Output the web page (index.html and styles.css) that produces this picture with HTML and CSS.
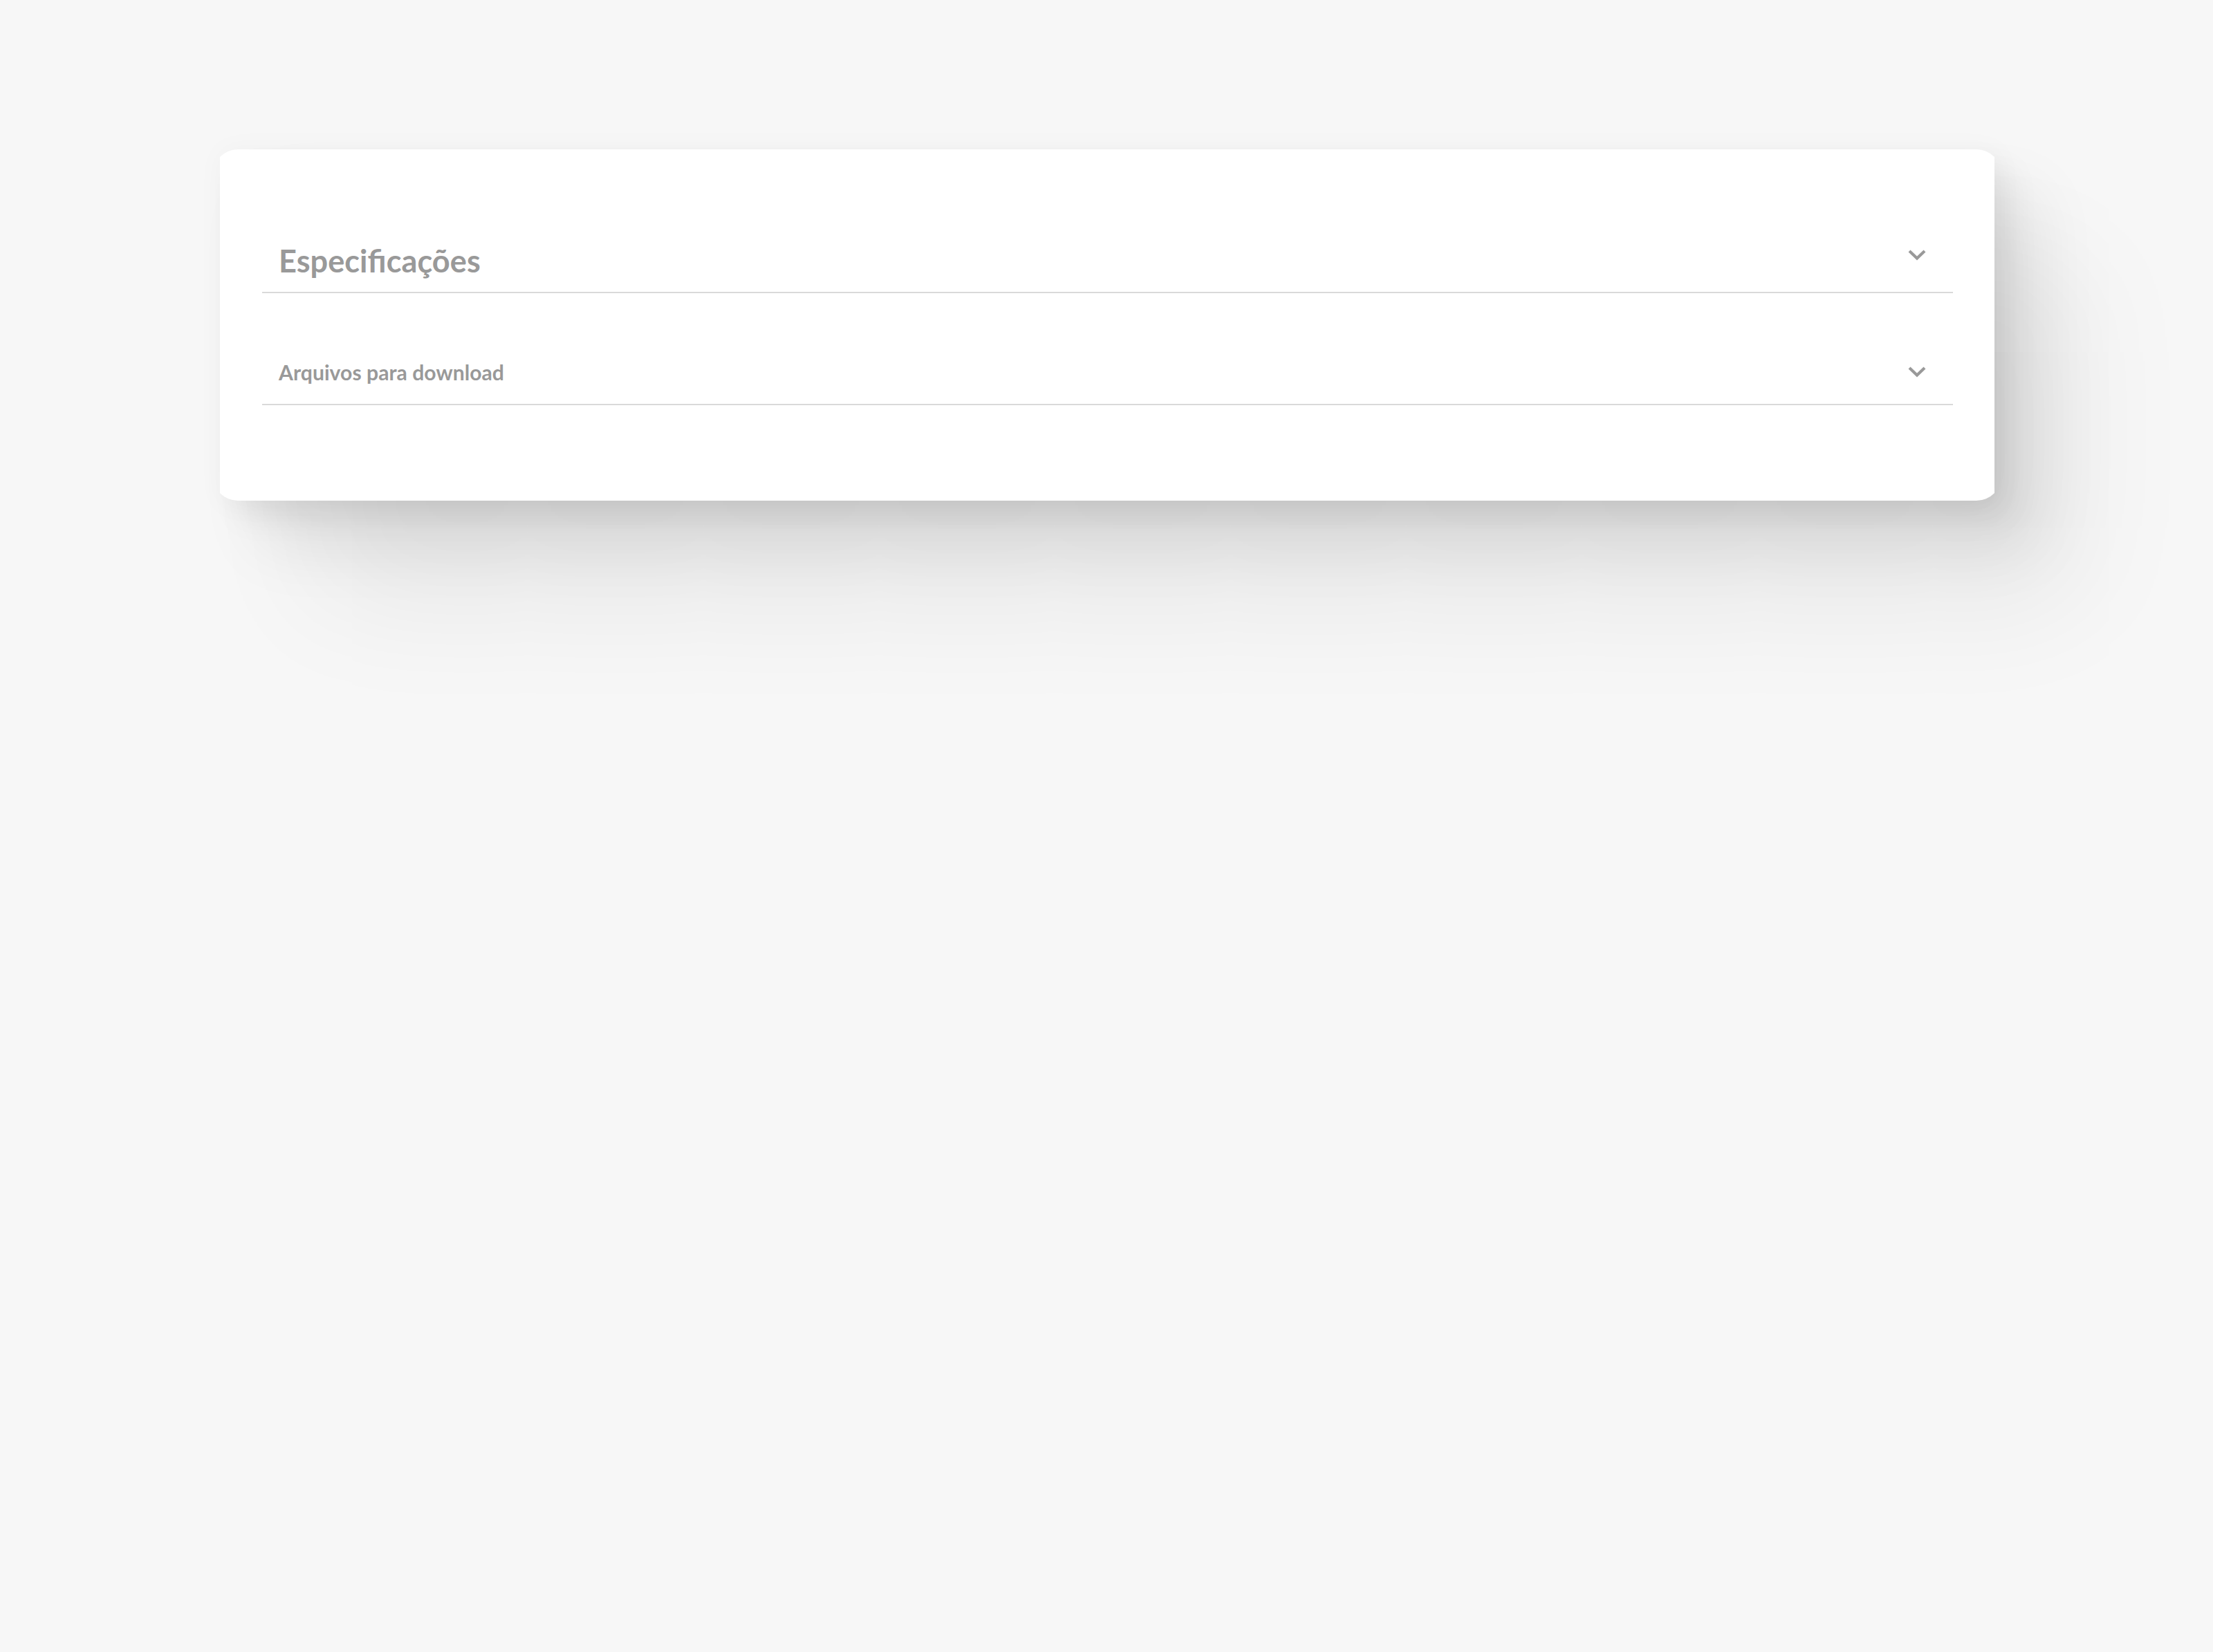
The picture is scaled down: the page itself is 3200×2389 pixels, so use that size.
FILE: index.html
```html
<!DOCTYPE html>
<html lang="pt-BR">
  <head>
    <meta charset="UTF-8" />
    <meta name="viewport" content="width=device-width, initial-scale=1" />
    <title>Produto</title>
    <link rel="stylesheet" href="styles.css">
  </head>
  <body>
    <section class="card">
      <div class="card-clip">
        <div class="card-body">
          <div class="accordion-item large">
            <h2>Especificações</h2>
            <svg class="chevron" viewBox="0 0 26 16" aria-hidden="true">
              <path d="M2 2 L13 12.5 L24 2" />
            </svg>
          </div>
          <div class="accordion-item">
            <h3>Arquivos para download</h3>
            <svg class="chevron" viewBox="0 0 26 16" aria-hidden="true">
              <path d="M2 2 L13 12.5 L24 2" />
            </svg>
          </div>
        </div>
      </div>
    </section>
  </body>
</html>
```

FILE: styles.css
```css
* {
  box-sizing: border-box;
}
body {
  margin: 0;
  min-height: 100vh;
  padding: 215.5px 316px 0 318px;
  background-color: #f7f7f7;
  color: #999;
  font-family: Lato, sans-serif;
  overflow: hidden;
}
.card {
  position: relative;
  z-index: 0;
  height: 508px;
}
/* shadow sits behind the card so it also shows in the cut corners */
.card::before {
  content: "";
  position: absolute;
  inset: 12px;
  z-index: -1;
  box-shadow: 4px 4px 40px 12px rgba(0, 0, 0, 0.04),
    26px 28px 42px 12px rgba(0, 0, 0, 0.05),
    60px 65px 88px 12px rgba(0, 0, 0, 0.08),
    130px 155px 180px 2px rgba(0, 0, 0, 0.065);
}
.card-clip {
  height: 100%;
  overflow: hidden;
}
.card-body {
  height: 100%;
  margin: 0 -10px;
  padding: 99.5px 70px 0 71px;
  background: #fff;
  border-radius: 36px;
}
.accordion-item {
  display: flex;
  justify-content: space-between;
  align-items: center;
  height: 162px;
  padding: 68px 39px 0 24px;
  border-bottom: 2px solid #d9d9d9;
}
.accordion-item.large {
  height: 108.5px;
  padding-top: 16px;
}
h2,
h3 {
  margin: 0;
  font-weight: 700;
}
h2 {
  font-size: 45.2px;
}
h3 {
  font-size: 30.2px;
}
.chevron {
  width: 26px;
  height: 16px;
}
.large .chevron {
  margin-bottom: 15px;
}
.chevron path {
  fill: none;
  stroke: #999;
  stroke-width: 4.2;
}
```
